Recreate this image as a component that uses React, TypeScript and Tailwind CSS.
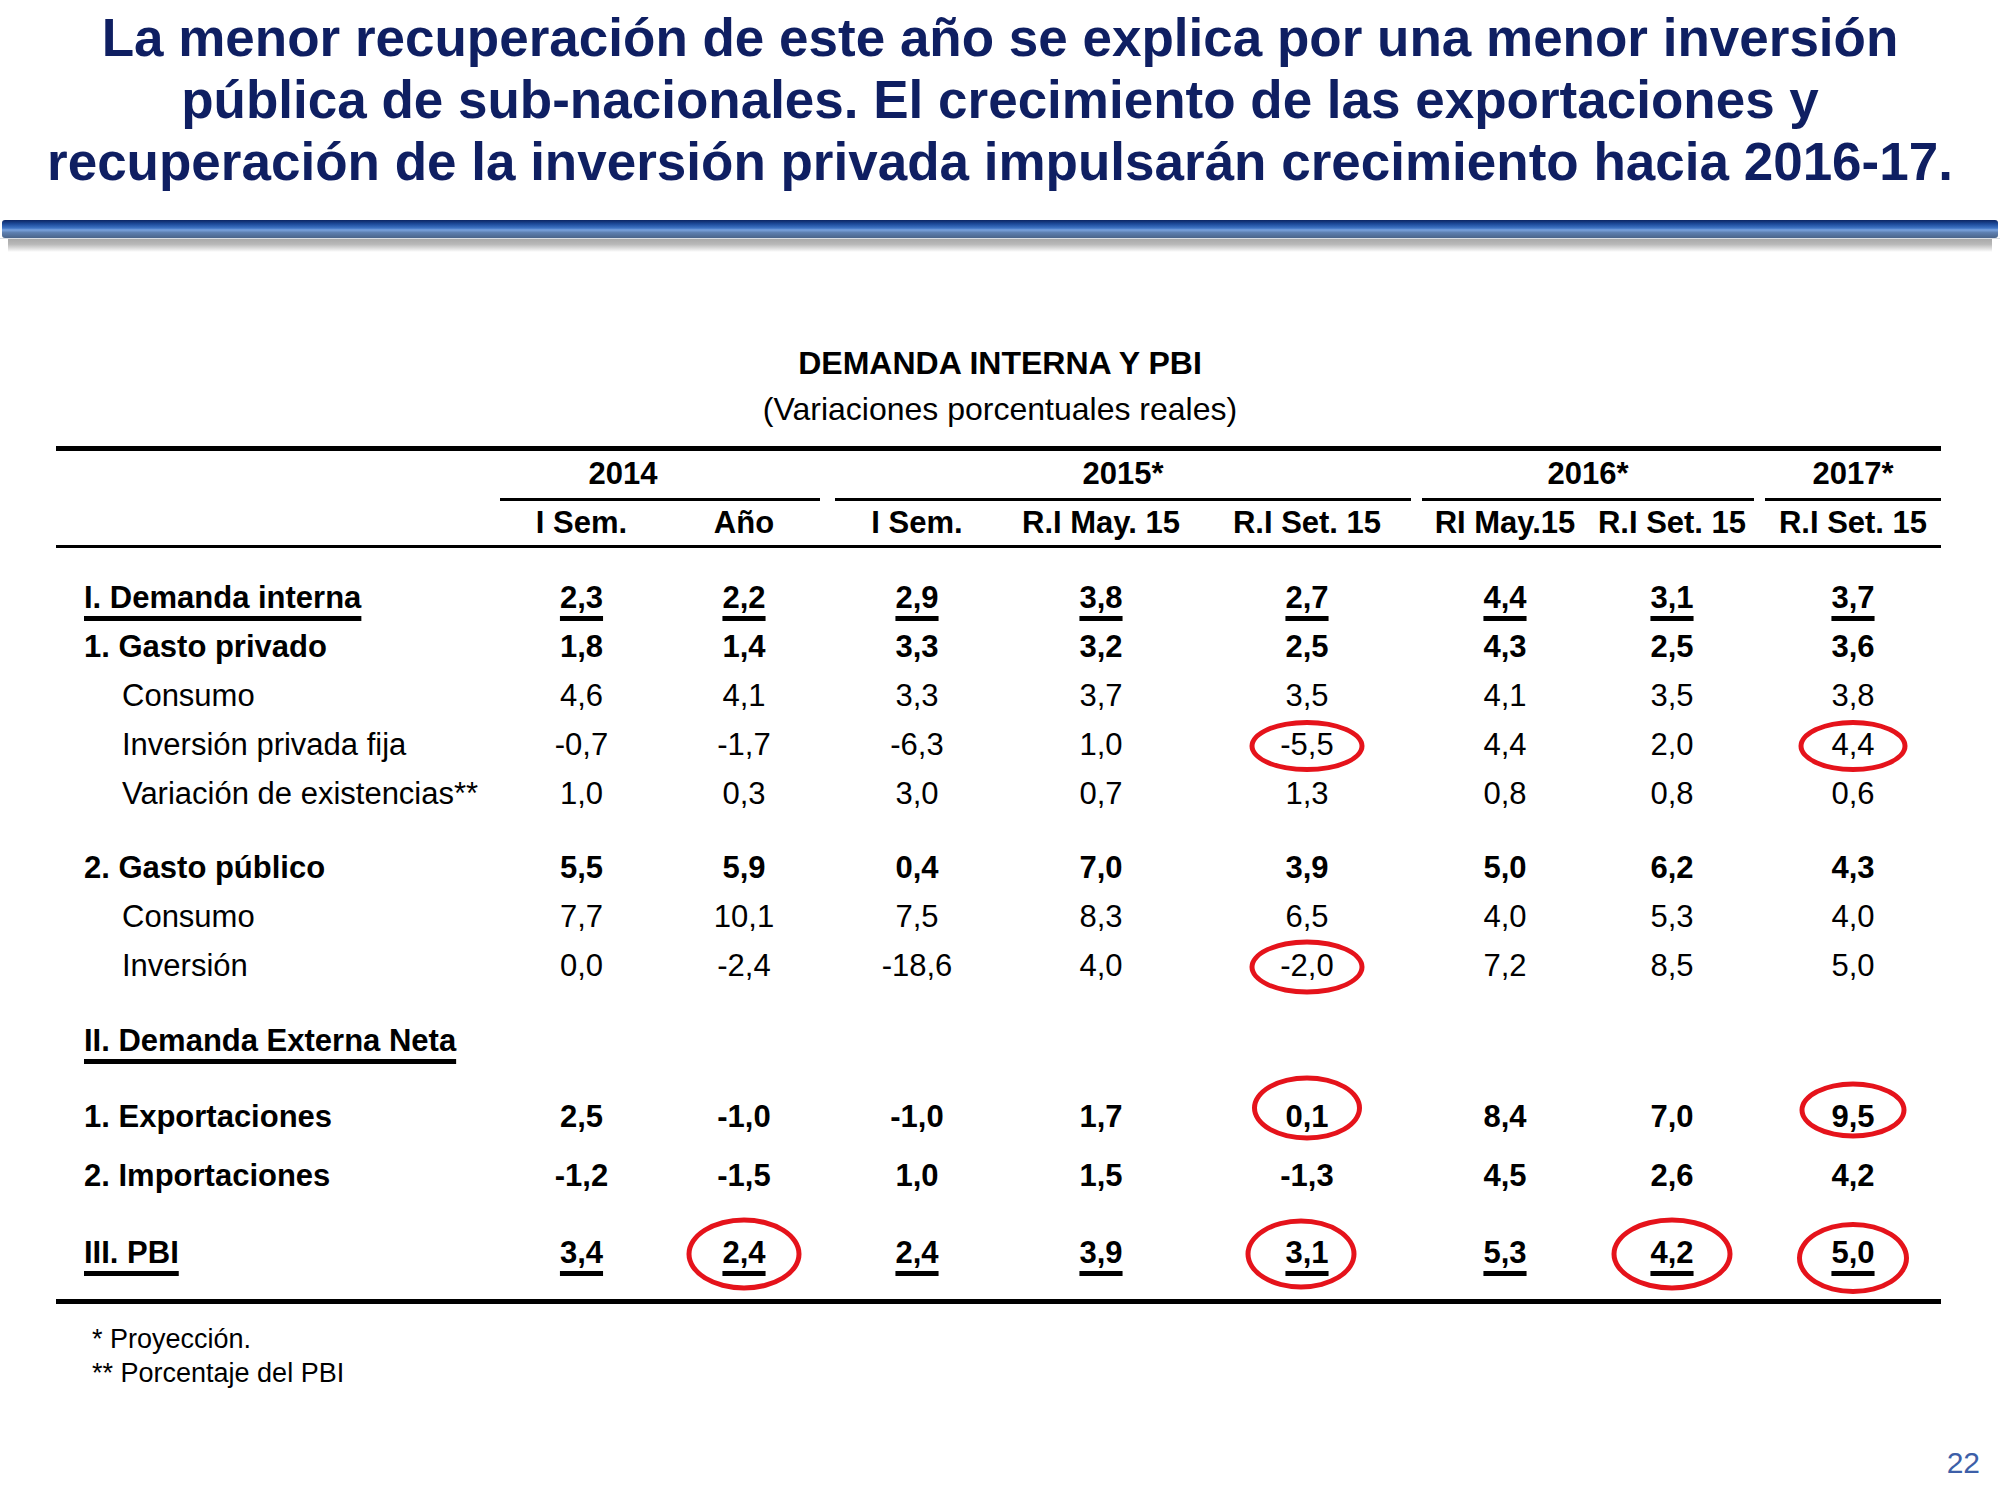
import React from 'react';

type Row = {
  label: string;
  kind: 'section' | 'bold' | 'sub';
  values?: string[];
  circles?: Record<number, string>;
  space: string;
};

const grid =
  'grid grid-cols-[444px_163px_162px_184px_184px_228px_168px_166px_186px]';

const rows: Row[] = [
  {
    label: 'I. Demanda interna',
    kind: 'section',
    values: ['2,3', '2,2', '2,9', '3,8', '2,7', '4,4', '3,1', '3,7'],
    space: 'mt-[26px]',
  },
  {
    label: '1. Gasto privado',
    kind: 'bold',
    values: ['1,8', '1,4', '3,3', '3,2', '2,5', '4,3', '2,5', '3,6'],
    space: '',
  },
  {
    label: 'Consumo',
    kind: 'sub',
    values: ['4,6', '4,1', '3,3', '3,7', '3,5', '4,1', '3,5', '3,8'],
    space: '',
  },
  {
    label: 'Inversión privada fija',
    kind: 'sub',
    values: ['-0,7', '-1,7', '-6,3', '1,0', '-5,5', '4,4', '2,0', '4,4'],
    circles: { 4: 'w-[115px] h-[52px]', 7: 'w-[109px] h-[52px] ml-[5px]' },
    space: '',
  },
  {
    label: 'Variación de existencias**',
    kind: 'sub',
    values: ['1,0', '0,3', '3,0', '0,7', '1,3', '0,8', '0,8', '0,6'],
    space: '',
  },
  {
    label: '2. Gasto público',
    kind: 'bold',
    values: ['5,5', '5,9', '0,4', '7,0', '3,9', '5,0', '6,2', '4,3'],
    space: 'mt-[25px]',
  },
  {
    label: 'Consumo',
    kind: 'sub',
    values: ['7,7', '10,1', '7,5', '8,3', '6,5', '4,0', '5,3', '4,0'],
    space: '',
  },
  {
    label: 'Inversión',
    kind: 'sub',
    values: ['0,0', '-2,4', '-18,6', '4,0', '-2,0', '7,2', '8,5', '5,0'],
    circles: { 4: 'w-[115px] h-[55px]' },
    space: '',
  },
  { label: 'II. Demanda Externa Neta', kind: 'section', space: 'mt-[26px]' },
  {
    label: '1. Exportaciones',
    kind: 'bold',
    values: ['2,5', '-1,0', '-1,0', '1,7', '0,1', '8,4', '7,0', '9,5'],
    circles: {
      4: 'w-[110px] h-[65px] mt-[-10px]',
      7: 'w-[107px] h-[57px] mt-[-8px] ml-[5px]',
    },
    space: 'mt-[27px]',
  },
  {
    label: '2. Importaciones',
    kind: 'bold',
    values: ['-1,2', '-1,5', '1,0', '1,5', '-1,3', '4,5', '2,6', '4,2'],
    space: 'mt-[10px]',
  },
  {
    label: 'III. PBI',
    kind: 'section',
    values: ['3,4', '2,4', '2,4', '3,9', '3,1', '5,3', '4,2', '5,0'],
    circles: {
      1: 'w-[115px] h-[73px]',
      4: 'w-[111px] h-[71px] ml-[-6px]',
      6: 'w-[121px] h-[73px]',
      7: 'w-[112px] h-[72px] mt-[4px] ml-[5px]',
    },
    space: 'mt-[28px]',
  },
];

const Ellipse = ({ size }: { size: string }) => (
  <span
    className={`pointer-events-none absolute left-1/2 top-1/2 -translate-x-1/2 -translate-y-1/2 rounded-[50%] border-[5px] border-[#e5131b] ${size}`}
  />
);

const App: React.FC = () => {
  return (
    <div className="w-[2000px] h-[1500px] bg-white flex flex-col font-['Liberation_Sans',Arial,sans-serif] text-black">
      {/* Slide title */}
      <h1 className="pt-[7px] text-center text-[53px] leading-[62px] font-bold text-[#0f1f62]">
        La menor recuperación de este año se explica por una menor inversión
        <br />
        pública de sub-nacionales. El crecimiento de las exportaciones y
        <br />
        recuperación de la inversión privada impulsarán crecimiento hacia 2016-17.
      </h1>

      {/* Blue rule with shadow */}
      <div className="mt-[27px] flex flex-col">
        <div className="h-[18px] mx-[2px] rounded-[3px] bg-[linear-gradient(to_bottom,#0c2563_0%,#1d4a9a_22%,#3f74c4_45%,#7aa3df_55%,#5d7fb0_70%,#4a6489_100%)]" />
        <div className="h-[1px] bg-[#d9dde3]" />
        <div className="h-[13px] mx-[8px] bg-[linear-gradient(to_bottom,#a9a9a9_0%,#b8b8b8_40%,#e6e6e6_80%,#ffffff_100%)]" />
      </div>

      {/* Table */}
      <div className="mt-[91px] flex flex-col items-center text-[32px]">
        <div className="h-[40px] leading-[40px] font-bold">DEMANDA INTERNA Y PBI</div>
        <div className="mt-[6px] h-[40px] leading-[40px]">(Variaciones porcentuales reales)</div>
      </div>

      <div className="mt-[17px] ml-[56px] w-[1885px] flex flex-col text-[31px]">
        <div className="h-[5px] bg-black" />

        <div className={`${grid} h-[41px] font-bold`}>
          <div />
          <div className="col-span-2 mr-[5px] pr-[74px] border-b-[3px] border-black flex items-center justify-center">2014</div>
          <div className="col-span-3 mx-[10px] border-b-[3px] border-black flex items-center justify-center">2015*</div>
          <div className="col-span-2 mx-[1px] border-b-[3px] border-black flex items-center justify-center">2016*</div>
          <div className="ml-[10px] border-b-[3px] border-black flex items-center justify-center">2017*</div>
        </div>

        <div className={`${grid} h-[56px] pt-[8px] font-bold items-center text-center border-b-[3px] border-black`}>
          <div />
          <div>I Sem.</div>
          <div>Año</div>
          <div>I Sem.</div>
          <div>R.I May. 15</div>
          <div>R.I Set. 15</div>
          <div>RI May.15</div>
          <div>R.I Set. 15</div>
          <div className="pl-[10px]">R.I Set. 15</div>
        </div>

        {rows.map((row, i) => {
          const strong = row.kind !== 'sub';
          const under = row.kind === 'section';
          const line = under ? 'underline decoration-[5px] underline-offset-[8px]' : '';
          return (
            <div key={i} className={`${grid} h-[49px] items-center ${row.space} ${strong ? 'font-bold' : ''}`}>
              <div className={row.kind === 'sub' ? 'pl-[66px]' : 'pl-[28px]'}>
                <span className={line}>{row.label}</span>
              </div>
              {(row.values ?? []).map((v, j) => (
                <div key={j} className={`relative flex items-center justify-center ${j === 7 ? 'pl-[10px]' : ''}`}>
                  <span className={line}>{v}</span>
                  {row.circles?.[j] && <Ellipse size={row.circles[j]} />}
                </div>
              ))}
            </div>
          );
        })}

        <div className="mt-[21px] h-[5px] bg-black" />

        <div className="mt-[18px] pl-[36px] text-[27px] leading-[34px]">
          <p>* Proyección.</p>
          <p>** Porcentaje del PBI</p>
        </div>
      </div>

      <div className="mt-[55px] pr-[20px] flex justify-end text-[30px] leading-[36px] text-[#3d5fa8]">22</div>
    </div>
  );
};

export default App;
